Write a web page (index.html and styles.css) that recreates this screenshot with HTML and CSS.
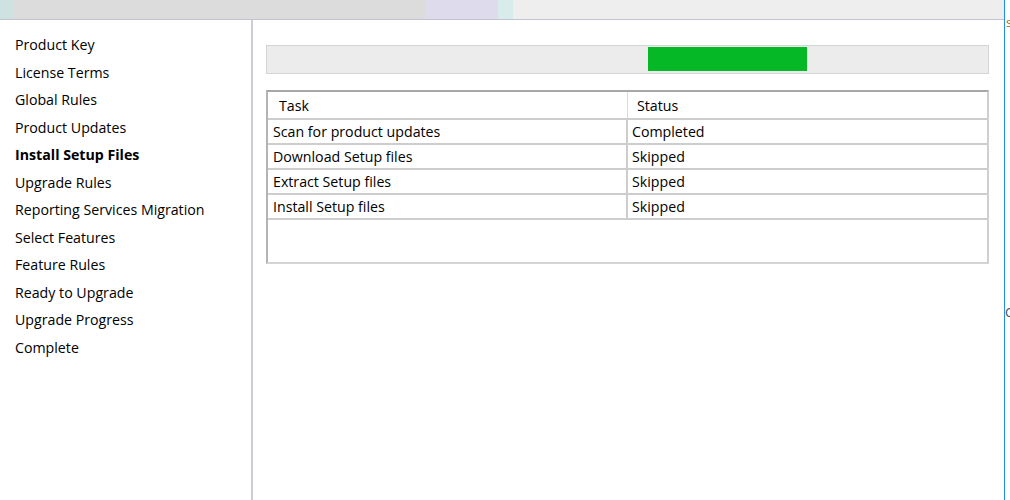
FILE: index.html
```html
<!DOCTYPE html>
<html>
<head>
<meta charset="utf-8">
<link rel="stylesheet" href="styles.css">
</head>
<body>
<div class="screen">
  <div class="window">
    <div class="titlebar">
      <div class="tb tb-teal"></div>
      <div class="tb tb-gray"></div>
      <div class="tb tb-lav"></div>
      <div class="tb tb-cyan"></div>
      <div class="tb tb-light"></div>
    </div>
    <div class="main">
      <nav class="nav">
        <div class="nav-item">Product Key</div>
        <div class="nav-item">License Terms</div>
        <div class="nav-item">Global Rules</div>
        <div class="nav-item">Product Updates</div>
        <div class="nav-item active">Install Setup Files</div>
        <div class="nav-item">Upgrade Rules</div>
        <div class="nav-item">Reporting Services Migration</div>
        <div class="nav-item">Select Features</div>
        <div class="nav-item">Feature Rules</div>
        <div class="nav-item">Ready to Upgrade</div>
        <div class="nav-item">Upgrade Progress</div>
        <div class="nav-item">Complete</div>
      </nav>
      <section class="content">
        <div class="progress">
          <div class="progress-fill"></div>
        </div>
        <div class="grid">
          <div class="row head">
            <div class="cell task">Task</div>
            <div class="cell status">Status</div>
          </div>
          <div class="row">
            <div class="cell task">Scan for product updates</div>
            <div class="cell status">Completed</div>
          </div>
          <div class="row">
            <div class="cell task">Download Setup files</div>
            <div class="cell status">Skipped</div>
          </div>
          <div class="row">
            <div class="cell task">Extract Setup files</div>
            <div class="cell status">Skipped</div>
          </div>
          <div class="row">
            <div class="cell task">Install Setup files</div>
            <div class="cell status">Skipped</div>
          </div>
        </div>
      </section>
    </div>
  </div>
  <div class="edge">
    <span class="frag frag-s">s</span>
    <span class="frag frag-c">C</span>
  </div>
</div>
</body>
</html>
```

FILE: styles.css
```css
html, body {
  margin: 0;
  padding: 0;
  background: #ffffff;
}

body {
  font-family: "Open Sans", "Noto Sans", "Liberation Sans", sans-serif;
  font-size: 14.2px;
  color: #000000;
}

.screen {
  display: flex;
  width: 1010px;
  height: 500px;
  overflow: hidden;
}

.window {
  width: 1004px;
  height: 500px;
  border-right: 1px solid #1e8ee8;
  display: flex;
  flex-direction: column;
  background: #ffffff;
}

.titlebar {
  display: flex;
  height: 19px;
  border-bottom: 1px solid #c4c1d4;
  flex-shrink: 0;
}

.tb { height: 100%; }
.tb-teal { width: 14px; background: #cfe2e2; }
.tb-gray { width: 411px; background: #dcdcdc; }
.tb-lav { width: 73px; background: #dddbec; }
.tb-cyan { width: 15px; background: #d9ecec; }
.tb-light { flex: 1; background: #eeeeee; }

.main {
  flex: 1;
  display: flex;
}

.nav {
  width: 253px;
  border-right: 2px solid #cfccd8;
  padding: 15px 0 0 15px;
  box-sizing: border-box;
  flex-shrink: 0;
}

.nav-item {
  height: 27.5px;
  line-height: 20px;
  white-space: nowrap;
  color: #000000;
}

.nav-item.active {
  font-weight: 700;
}

.content {
  flex: 1;
  padding: 25px 15px 0 13px;
}

.progress {
  height: 27px;
  border: 1px solid #d4d4d4;
  background: #ececec;
  position: relative;
  margin-right: 1px;
}

.progress-fill {
  position: absolute;
  left: 381px;
  top: 1px;
  width: 159px;
  height: 24px;
  background: #04b826;
}

.grid {
  margin-top: 16px;
  height: 174px;
  border-top: 2px solid #a8a8a8;
  border-left: 2px solid #b4b4b4;
  border-right: 2px solid #cfcfcf;
  border-bottom: 2px solid #d4d4d4;
  box-sizing: border-box;
  margin-right: 1px;
}

.row {
  display: flex;
  height: 25px;
  border-bottom: 2px solid #cdcdcd;
  box-sizing: border-box;
  width: 719px;
}

.row.head {
  height: 28px;
}

.cell {
  line-height: 24px;
  white-space: nowrap;
  box-sizing: border-box;
}

.head .cell {
  line-height: 27px;
}

.cell.task {
  width: 360px;
  padding-left: 5px;
  border-right: 2px solid #cdcdcd;
}

.head .cell.task {
  padding-left: 11px;
  border-right: 1px solid #dcdcdc;
}

.cell.status {
  flex: 1;
  padding-left: 4px;
}

.head .cell.status {
  padding-left: 9px;
}

.edge {
  flex: 1;
  position: relative;
  overflow: hidden;
  background: #ffffff;
}

.frag {
  position: absolute;
  font-size: 13px;
  line-height: 15px;
}

.frag-s { left: 1px; top: 15px; color: #9a6a10; }
.frag-c { left: 0; top: 305px; color: #404a60; }
```
